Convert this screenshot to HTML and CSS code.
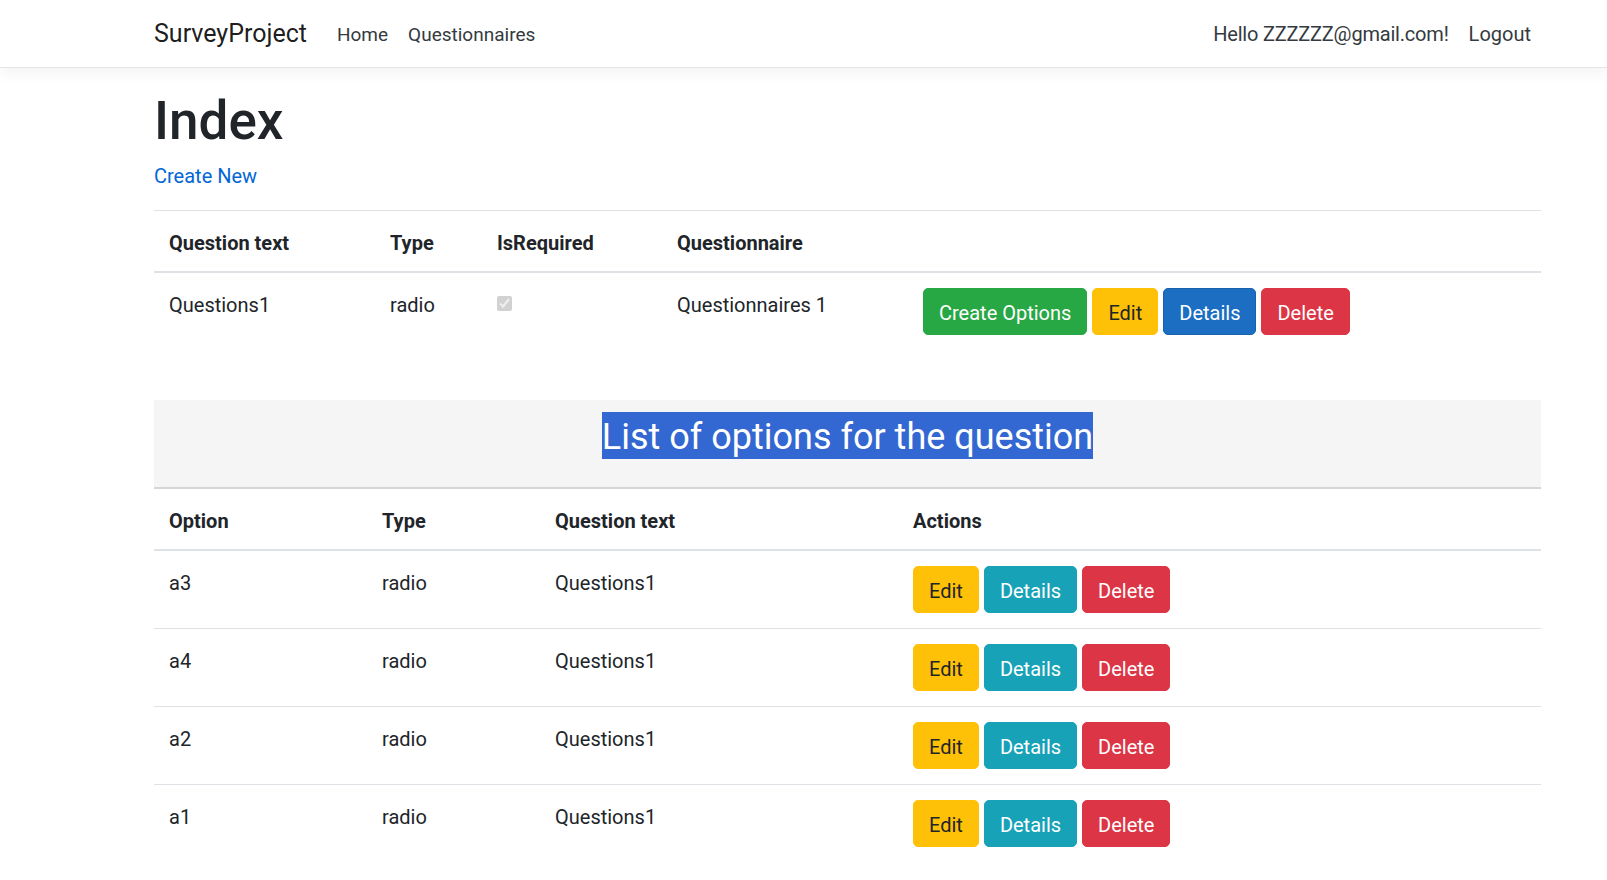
FILE: index.html
```html
<!DOCTYPE html>
<html lang="en">
<head>
<meta charset="utf-8">
<title>Index - SurveyProject</title>
<link rel="stylesheet" href="styles.css">
</head>
<body>
<header class="navbar">
  <div class="container nav-inner">
    <a class="brand" href="#">SurveyProject</a>
    <nav class="nav-left">
      <a class="nav-link small" href="#">Home</a>
      <a class="nav-link small" href="#">Questionnaires</a>
    </nav>
    <nav class="nav-right">
      <a class="nav-link hello" href="#">Hello ZZZZZZ@gmail.com!</a>
      <a class="nav-link" href="#">Logout</a>
    </nav>
  </div>
</header>

<main class="container main">
  <h1 class="page-title">Index</h1>
  <p class="create"><a href="#">Create New</a></p>

  <table class="table questions">
    <thead>
      <tr>
        <th class="q-c1">Question text</th>
        <th class="q-c2">Type</th>
        <th class="q-c3">IsRequired</th>
        <th class="q-c4">Questionnaire</th>
        <th></th>
      </tr>
    </thead>
    <tbody>
      <tr>
        <td>Questions1</td>
        <td>radio</td>
        <td><input class="check" type="checkbox" checked disabled></td>
        <td>Questionnaires 1</td>
        <td>
          <div class="actions">
            <a class="btn btn-success" href="#">Create Options</a>
            <a class="btn btn-warning" href="#">Edit</a>
            <a class="btn btn-primary" href="#">Details</a>
            <a class="btn btn-danger" href="#">Delete</a>
          </div>
        </td>
      </tr>
    </tbody>
  </table>

  <section class="options">
    <div class="section-title"><h2 class="selected">List of options for the question</h2></div>
    <table class="table opts">
      <thead>
        <tr>
          <th class="o-c1">Option</th>
          <th class="o-c2">Type</th>
          <th class="o-c3">Question text</th>
          <th>Actions</th>
        </tr>
      </thead>
      <tbody>
        <tr>
          <td>a3</td><td>radio</td><td>Questions1</td>
          <td><div class="actions"><a class="btn btn-warning" href="#">Edit</a><a class="btn btn-info" href="#">Details</a><a class="btn btn-danger" href="#">Delete</a></div></td>
        </tr>
        <tr>
          <td>a4</td><td>radio</td><td>Questions1</td>
          <td><div class="actions"><a class="btn btn-warning" href="#">Edit</a><a class="btn btn-info" href="#">Details</a><a class="btn btn-danger" href="#">Delete</a></div></td>
        </tr>
        <tr>
          <td>a2</td><td>radio</td><td>Questions1</td>
          <td><div class="actions"><a class="btn btn-warning" href="#">Edit</a><a class="btn btn-info" href="#">Details</a><a class="btn btn-danger" href="#">Delete</a></div></td>
        </tr>
        <tr>
          <td>a1</td><td>radio</td><td>Questions1</td>
          <td><div class="actions"><a class="btn btn-warning" href="#">Edit</a><a class="btn btn-info" href="#">Details</a><a class="btn btn-danger" href="#">Delete</a></div></td>
        </tr>
      </tbody>
    </table>
  </section>
</main>
</body>
</html>
```

FILE: styles.css
```css
* { box-sizing: border-box; }

html, body {
  margin: 0;
  padding: 0;
  background: #fff;
}

body {
  font-family: Roboto, "Liberation Sans", sans-serif;
  font-size: 20px;
  line-height: 1.5;
  color: #212529;
}

a { text-decoration: none; }

.container {
  padding-left: 154px;
  padding-right: 66px;
}

/* navbar */
.navbar {
  height: 68px;
  border-bottom: 1px solid #e5e5e5;
  box-shadow: 0 5px 15px rgba(0, 0, 0, 0.05);
  margin-bottom: 22px;
  background: #fff;
}

.nav-inner {
  height: 67px;
  display: flex;
  align-items: center;
}

.brand {
  font-size: 25px;
  color: rgba(0, 0, 0, 0.9);
  margin-right: 20px;
  white-space: nowrap;
}

.nav-left, .nav-right {
  display: flex;
  align-items: center;
}

.nav-right { margin-left: auto; }

.nav-link {
  color: #343a40;
  padding: 0 10px;
  white-space: nowrap;
}

.nav-link.small {
  font-size: 19px;
  padding-top: 3px;
}

.nav-link.hello { letter-spacing: -0.2px; }

/* main */
.page-title {
  font-size: 53px;
  font-weight: 500;
  line-height: 1.2;
  margin: 0 0 7px;
}

.create {
  margin: 0 0 19px;
}

.create a { color: #0366d6; }

.table {
  width: 100%;
  border-collapse: collapse;
  table-layout: fixed;
}

.table th {
  text-align: left;
  font-weight: 700;
  padding: 17px 15px 13px;
  border-bottom: 2px solid #dee2e6;
  vertical-align: bottom;
}

.table td {
  padding: 17px 15px 13px;
  vertical-align: top;
  border-top: 1px solid #dee2e6;
}

.questions th { border-top: 1px solid #dee2e6; }
.questions { margin-bottom: 50px; }

.q-c1 { width: 221px; }
.q-c2 { width: 107px; }
.q-c3 { width: 180px; }
.q-c4 { width: 246px; }

.o-c1 { width: 213px; }
.o-c2 { width: 173px; }
.o-c3 { width: 358px; }

.check {
  width: 15px;
  height: 15px;
  margin: 6px 0 0;
  vertical-align: top;
}

/* buttons */
.actions {
  display: flex;
  gap: 5px;
  margin-top: -2px;
  margin-bottom: 2px;
}

.btn {
  display: inline-block;
  font-size: 20px;
  line-height: 30px;
  padding: 9.5px 15px 5.5px;
  border: 1px solid transparent;
  border-radius: 5px;
  white-space: nowrap;
}

.btn-success { background: #28a745; border-color: #28a745; color: #fff; }
.btn-warning { background: #ffc107; border-color: #ffc107; color: #212529; }
.btn-primary { background: #1b6ec2; border-color: #1861ac; color: #fff; }
.btn-info    { background: #17a2b8; border-color: #17a2b8; color: #fff; }
.btn-danger  { background: #dc3545; border-color: #dc3545; color: #fff; }

/* options section */
.section-title {
  display: flex;
  justify-content: center;
  background: #f5f5f5;
  padding: 12px 0 28px;
  border-bottom: 2px solid #d6d6d6;
}

.selected {
  margin: 0;
  display: inline-block;
  font-size: 36px;
  font-weight: 400;
  line-height: 43px;
  padding-top: 4px;
  background: #3367d1;
  color: #fff;
}
```
